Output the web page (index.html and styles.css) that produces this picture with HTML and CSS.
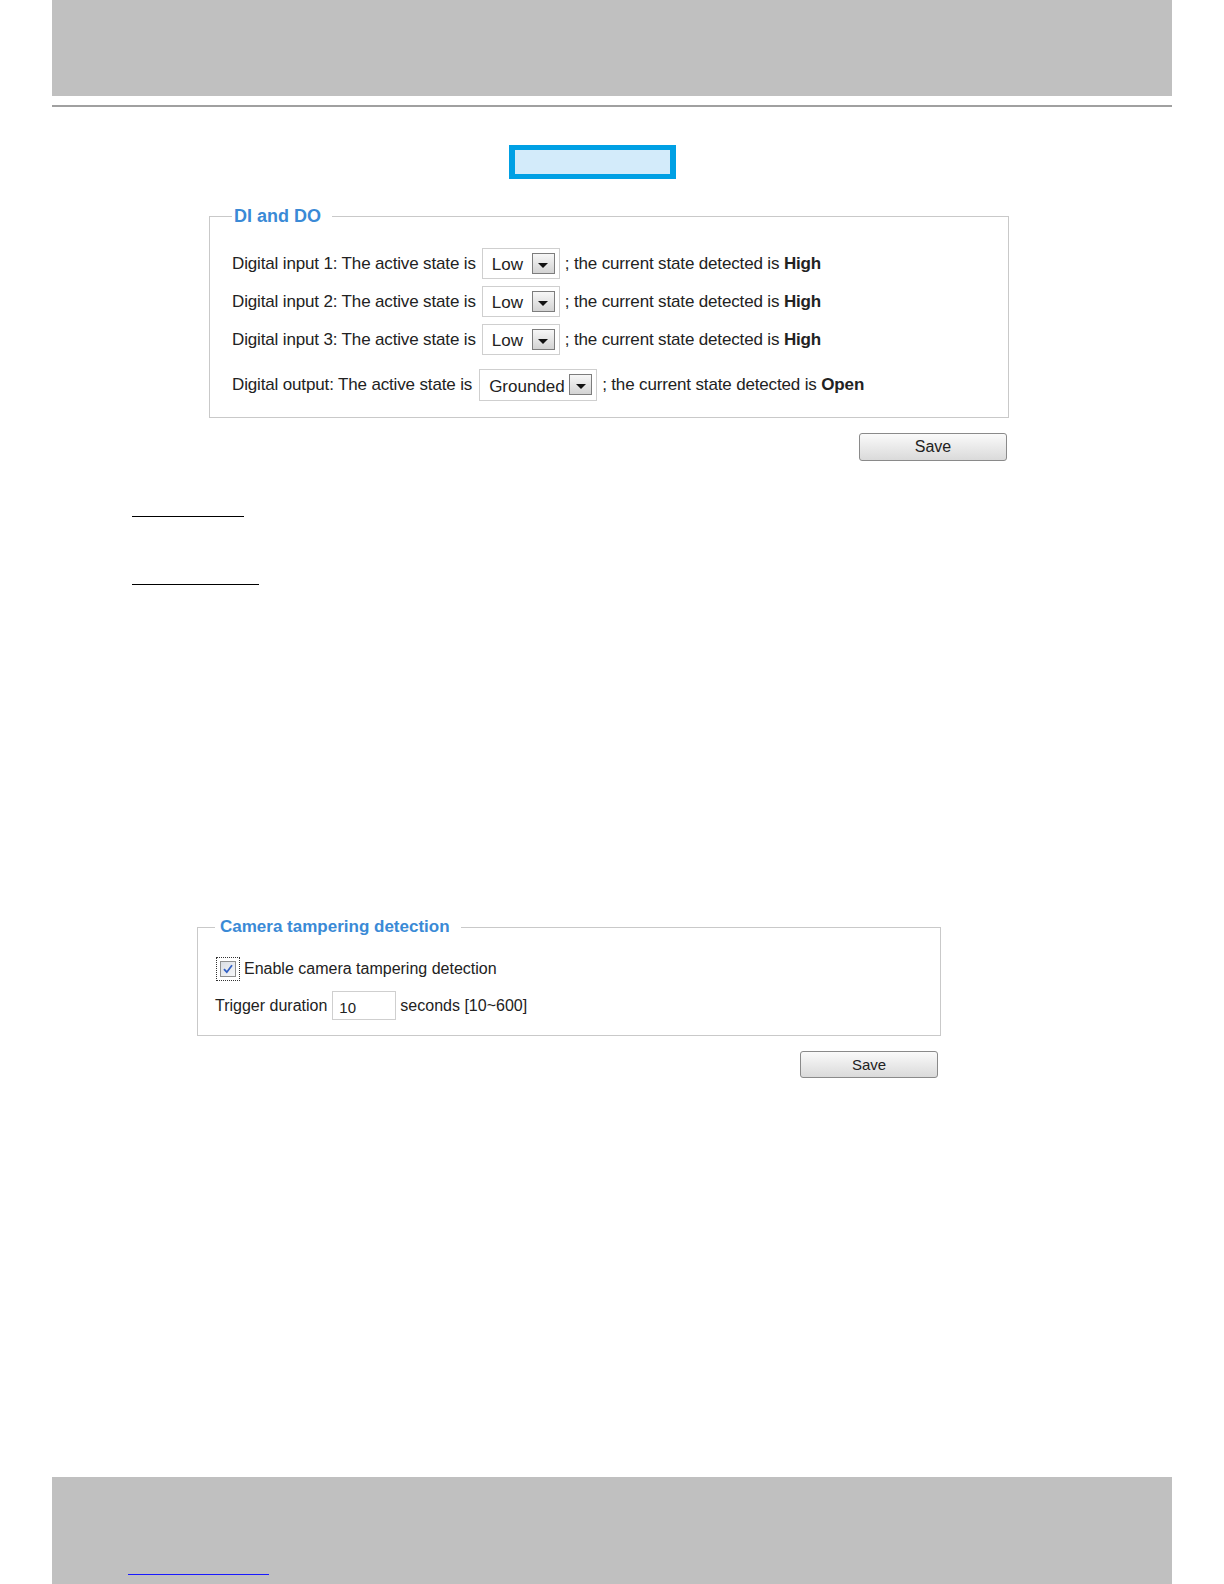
FILE: index.html
```html
<!DOCTYPE html>
<html lang="en">
<head>
    <meta charset="UTF-8">
    <meta name="viewport" content="width=device-width, initial-scale=1.0">
    <title>DI and DO / Camera tampering</title>
    <link rel="stylesheet" href="styles.css">
</head>
<body>
    <div class="page">
        <header class="top-bar"></header>
        <div class="rule"></div>

        <main class="content">
            <div class="tab-box"></div>

            <fieldset class="group group-dio">
                <legend>DI and DO</legend>
                <div class="row">
                    <span>Digital input 1: The active state is</span>
                    <span class="select sel-short">Low<span class="drop"></span></span>
                    <span>; the current state detected is <b>High</b></span>
                </div>
                <div class="row">
                    <span>Digital input 2: The active state is</span>
                    <span class="select sel-short">Low<span class="drop"></span></span>
                    <span>; the current state detected is <b>High</b></span>
                </div>
                <div class="row">
                    <span>Digital input 3: The active state is</span>
                    <span class="select sel-short">Low<span class="drop"></span></span>
                    <span>; the current state detected is <b>High</b></span>
                </div>
                <div class="row row-out">
                    <span>Digital output: The active state is</span>
                    <span class="select sel-long">Grounded<span class="drop"></span></span>
                    <span>; the current state detected is <b>Open</b></span>
                </div>
            </fieldset>
            <div class="actions actions-dio">
                <button type="button" class="save save-dio">Save</button>
            </div>

            <div class="link-line line-short"></div>
            <div class="link-line line-long"></div>

            <fieldset class="group group-tamper">
                <legend>Camera tampering detection</legend>
                <div class="row row-check">
                    <span class="checkbox">
                        <svg width="16" height="16" viewBox="0 0 16 16">
                            <defs>
                                <linearGradient id="cbfill" x1="0" y1="0" x2="1" y2="1">
                                    <stop offset="0" stop-color="#d9dde3"/>
                                    <stop offset="1" stop-color="#f7f8fa"/>
                                </linearGradient>
                            </defs>
                            <rect x="0.5" y="0.5" width="15" height="15" fill="url(#cbfill)" stroke="#8e8f8f"/>
                            <path d="M4 8.2 L6.8 11.2 L12 4.3" fill="none" stroke="#3160c4" stroke-width="1.8"/>
                        </svg>
                    </span>
                    <span>Enable camera tampering detection</span>
                </div>
                <div class="row row-trigger">
                    <span>Trigger duration</span>
                    <span class="text-input">10</span>
                    <span>seconds [10~600]</span>
                </div>
            </fieldset>
            <div class="actions actions-tamper">
                <button type="button" class="save save-tamper">Save</button>
            </div>
        </main>

        <footer class="bottom-bar">
            <span class="foot-link"></span>
        </footer>
    </div>
</body>
</html>
```

FILE: styles.css
```css
body {
    margin: 0;
    padding: 0;
    background-color: #fff;
    font-family: "Liberation Sans", Arial, sans-serif;
    color: #222;
}
.page {
    margin: 0 52px;
    min-height: 1584px;
    display: flex;
    flex-direction: column;
}
.top-bar {
    height: 96px;
    background-color: #c0c0c0;
}
.rule {
    margin-top: 9px;
    border-top: 2px solid #a0a0a0;
}
.content {
    display: flex;
    flex-direction: column;
    align-items: flex-start;
}
.tab-box {
    box-sizing: border-box;
    width: 167px;
    height: 34px;
    margin: 38px 0 0 457px;
    border: solid #00a0e4;
    border-width: 5px 6px;
    background-color: #d3ebfa;
}

/* fieldsets */
.group {
    box-sizing: border-box;
    margin: 0;
    border: 1px solid #c9c9c9;
}
.group legend {
    font-weight: bold;
    color: #3a8ad6;
}
.group-dio {
    width: 800px;
    margin: 26px 0 0 157px;
    padding: 21px 0 16px 22px;
    font-size: 17px;
    letter-spacing: -0.15px;
}
.group-dio legend {
    font-size: 18px;
    line-height: 22px;
    letter-spacing: 0;
    padding: 0 11px 0 2px;
}
.group-tamper {
    width: 744px;
    margin: 332px 0 0 145px;
    padding: 19px 0 15px 17px;
    font-size: 16px;
}
.group-tamper legend {
    font-size: 17px;
    line-height: 20px;
    padding: 0 11px 0 5px;
}

.row {
    display: flex;
    align-items: center;
    white-space: nowrap;
}
.group-dio .row {
    height: 31px;
    margin-bottom: 7px;
}
.group-dio .row-out {
    height: 32px;
    margin: 14px 0 0;
}

/* fake select boxes */
.select {
    box-sizing: border-box;
    display: flex;
    align-items: center;
    justify-content: space-between;
    height: 100%;
    margin: 0 5px 0 6px;
    padding: 3px 4px 0 9px;
    border: 1px solid #cfcfcf;
    background-color: #fff;
    letter-spacing: 0;
}
.sel-short {
    width: 78px;
}
.sel-long {
    width: 118px;
    margin-left: 7px;
}
.drop {
    box-sizing: border-box;
    display: flex;
    align-items: center;
    justify-content: center;
    width: 23px;
    height: 21px;
    margin-top: -4px;
    border: 1px solid #7d7d7d;
    background: linear-gradient(#f7f7f7, #d3d3d3);
}
.drop::after {
    content: "";
    margin-top: 4px;
    border-left: 5px solid transparent;
    border-right: 5px solid transparent;
    border-top: 5px solid #111;
}

.row-check {
    height: 26px;
    margin-bottom: 9px;
}
.checkbox {
    display: flex;
    margin: 0 8px 0 5px;
    outline: 1px dotted #333;
    outline-offset: 3px;
}
.row-trigger {
    height: 29px;
}
.text-input {
    box-sizing: border-box;
    width: 64px;
    height: 29px;
    margin: 0 4px 0 5px;
    padding: 7px 0 0 6px;
    border: 1px solid #cfcfcf;
    font-size: 15px;
}

/* buttons */
.actions {
    display: flex;
    justify-content: flex-end;
    margin-top: 15px;
}
.actions-dio {
    width: 800px;
    margin-left: 157px;
    padding-right: 2px;
    box-sizing: border-box;
}
.actions-tamper {
    width: 744px;
    margin-left: 145px;
    padding-right: 3px;
    box-sizing: border-box;
}
.save {
    border: 1px solid #8a8a8a;
    border-radius: 3px;
    background: linear-gradient(#fafafa, #dadada);
    color: #222;
    font-family: "Liberation Sans", Arial, sans-serif;
    cursor: pointer;
}
.save-dio {
    width: 148px;
    height: 28px;
    font-size: 16px;
}
.save-tamper {
    width: 138px;
    height: 27px;
    font-size: 15px;
}

.link-line {
    margin-left: 80px;
    border-bottom: 1px solid #000;
}
.line-short {
    width: 112px;
    margin-top: 55px;
}
.line-long {
    width: 127px;
    margin-top: 67px;
}

.bottom-bar {
    margin-top: auto;
    height: 107px;
    background-color: #c0c0c0;
    display: flex;
    align-items: flex-end;
}
.foot-link {
    width: 141px;
    margin: 0 0 9px 76px;
    border-bottom: 1px solid #1a1aff;
}
```
